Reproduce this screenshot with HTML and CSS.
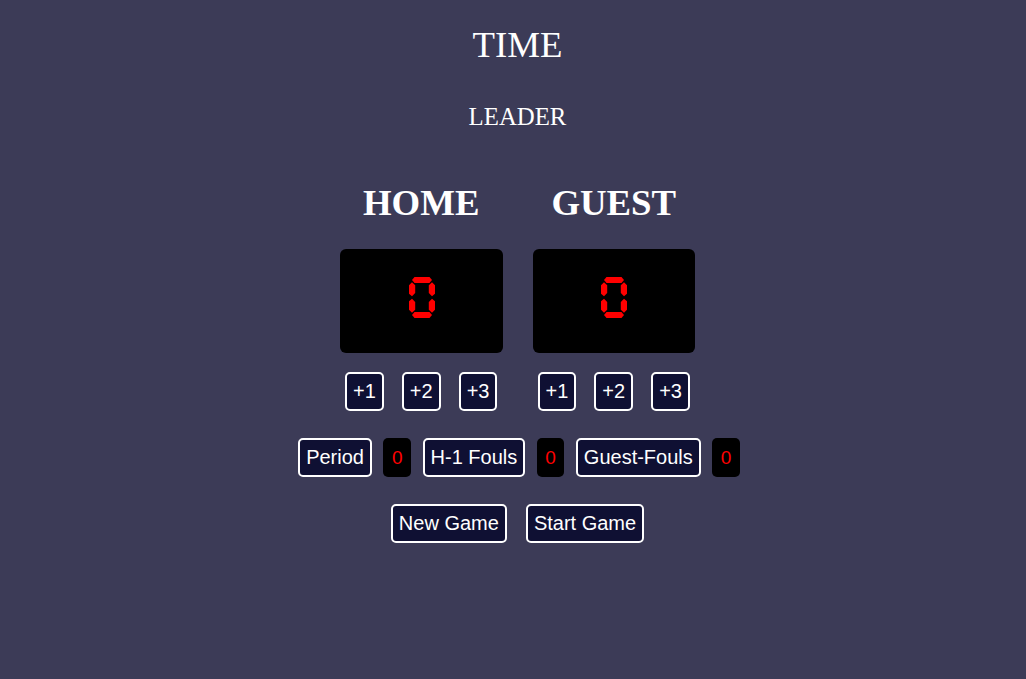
FILE: index.html
```html
<!DOCTYPE html>
<html lang="en">
<head>
<meta charset="utf-8">
<title>Scoreboard</title>
<link rel="stylesheet" href="styles.css">
</head>
<body>
<main class="board">
  <h1 class="time">TIME</h1>
  <h2 class="leader">LEADER</h2>
  <section class="teams">
    <div class="team">
      <h3 class="team-name">HOME</h3>
      <div class="score" aria-label="0">
        <svg class="digit" viewBox="0 0 26 41" width="26" height="41" role="img" aria-label="0">
          <polygon points="5.5,0 20.5,0 23,3 20.5,6 5.5,6 3,3"/>
          <polygon points="5.5,35 20.5,35 23,38 20.5,41 5.5,41 3,38"/>
          <polygon points="3,5.2 6.2,8.2 6.2,16 3,19.2 0,16.8 0,8.2"/>
          <polygon points="3,21.8 6.2,25 6.2,32.8 3,35.8 0,32.8 0,24.2"/>
          <polygon points="23,5.2 26,8.2 26,16.8 23,19.2 19.8,16 19.8,8.2"/>
          <polygon points="23,21.8 26,24.2 26,32.8 23,35.8 19.8,32.8 19.8,25"/>
        </svg>
      </div>
      <div class="adds">
        <button class="btn">+1</button>
        <button class="btn">+2</button>
        <button class="btn">+3</button>
      </div>
    </div>
    <div class="team">
      <h3 class="team-name">GUEST</h3>
      <div class="score" aria-label="0">
        <svg class="digit" viewBox="0 0 26 41" width="26" height="41" role="img" aria-label="0">
          <polygon points="5.5,0 20.5,0 23,3 20.5,6 5.5,6 3,3"/>
          <polygon points="5.5,35 20.5,35 23,38 20.5,41 5.5,41 3,38"/>
          <polygon points="3,5.2 6.2,8.2 6.2,16 3,19.2 0,16.8 0,8.2"/>
          <polygon points="3,21.8 6.2,25 6.2,32.8 3,35.8 0,32.8 0,24.2"/>
          <polygon points="23,5.2 26,8.2 26,16.8 23,19.2 19.8,16 19.8,8.2"/>
          <polygon points="23,21.8 26,24.2 26,32.8 23,35.8 19.8,32.8 19.8,25"/>
        </svg>
      </div>
      <div class="adds">
        <button class="btn">+1</button>
        <button class="btn">+2</button>
        <button class="btn">+3</button>
      </div>
    </div>
  </section>
  <div class="stats">
    <button class="btn">Period</button>
    <span class="value">0</span>
    <button class="btn">H-1 Fouls</button>
    <span class="value">0</span>
    <button class="btn">Guest-Fouls</button>
    <span class="value">0</span>
  </div>
  <div class="controls">
    <button class="btn">New Game</button>
    <button class="btn">Start Game</button>
  </div>
</main>
</body>
</html>
```
FILE: styles.css
```css
html, body {
  margin: 0;
  padding: 0;
  background: #3c3b57;
  height: 100%;
}

body {
  font-family: "Liberation Serif", "Times New Roman", serif;
  color: #ffffff;
}

.board {
  display: flex;
  flex-direction: column;
  align-items: center;
  padding: 25px 0 0 9px;
}

.time {
  margin: 0;
  font-size: 36.8px;
  font-weight: normal;
  line-height: 40px;
}

.leader {
  margin: 38px 0 0;
  font-size: 24.8px;
  font-weight: normal;
  line-height: 28px;
}

.teams {
  display: flex;
  gap: 30px;
  margin-top: 52px;
}

.team {
  width: 162.5px;
  display: flex;
  flex-direction: column;
  align-items: center;
}

.team-name {
  margin: 0;
  font-size: 36.8px;
  font-weight: bold;
  line-height: 40px;
}

.score {
  margin-top: 26px;
  width: 100%;
  height: 104px;
  background: #000000;
  border-radius: 6px;
  display: flex;
  align-items: center;
  justify-content: center;
}

.digit {
  display: block;
  fill: #ff0000;
  margin: 0 0 8px 1px;
}

.adds {
  display: flex;
  gap: 18px;
  margin-top: 19px;
}

.btn {
  font-family: "Liberation Sans", Arial, sans-serif;
  font-size: 20px;
  line-height: 23px;
  padding: 6px 6px;
  color: #ffffff;
  background: #0f1033;
  border: 2px solid #ffffff;
  border-radius: 5px;
  margin: 0;
}

.stats {
  display: flex;
  gap: 11.5px;
  margin-top: 27px;
  padding-left: 3px;
}

.value {
  font-family: "Liberation Sans", Arial, sans-serif;
  font-size: 19px;
  line-height: 23px;
  padding: 8px 8.5px;
  color: #ff0000;
  background: #000000;
  border-radius: 5px;
}

.controls {
  display: flex;
  gap: 19px;
  margin-top: 27px;
}
```
